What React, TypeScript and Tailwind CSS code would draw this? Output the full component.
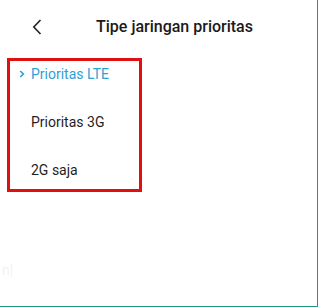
export default function App() {
  return (
    <div
      className="relative w-[318px] h-[307px] bg-white border-r border-b border-[#1a9a8a] overflow-hidden"
      style={{ fontFamily: "Roboto, 'Noto Sans', sans-serif" }}
    >
      <div className="flex items-center h-[54px] pl-[32px]">
        <svg width="10" height="16" viewBox="0 0 10 16" className="shrink-0">
          <path d="M8.5 1 L1.8 8 L8.5 15" fill="none" stroke="#222" strokeWidth="1.6" />
        </svg>
        <div className="flex-1 text-center pl-[32px] text-[16px] font-medium text-[#1a1a1a]">
          Tipe jaringan prioritas
        </div>
        <div className="w-[42px]" />
      </div>

      <div className="ml-[7px] mt-[4px] w-[135px] h-[134px] border-[3px] border-[#e01010] pt-[3px] flex flex-col gap-[28px]">
        <div className="relative h-[20px] flex items-center pl-[21px] text-[14px] text-[#2f9fd4]">
          <svg width="6" height="8" viewBox="0 0 6 8" className="absolute left-[9px] top-[6px]">
            <path d="M1.2 1 L4.4 4 L1.2 7" fill="none" stroke="#2f9fd4" strokeWidth="1.6" />
          </svg>
          Prioritas LTE
        </div>
        <div className="h-[20px] flex items-center pl-[21px] text-[14px] text-[#1f1f1f]">
          Prioritas 3G
        </div>
        <div className="h-[20px] flex items-center pl-[21px] text-[14px] text-[#1f1f1f]">
          2G saja
        </div>
      </div>

      <div className="mt-[68px] pl-[2px] text-[14px] text-[#f2f2f2]">n|</div>
    </div>
  );
}
